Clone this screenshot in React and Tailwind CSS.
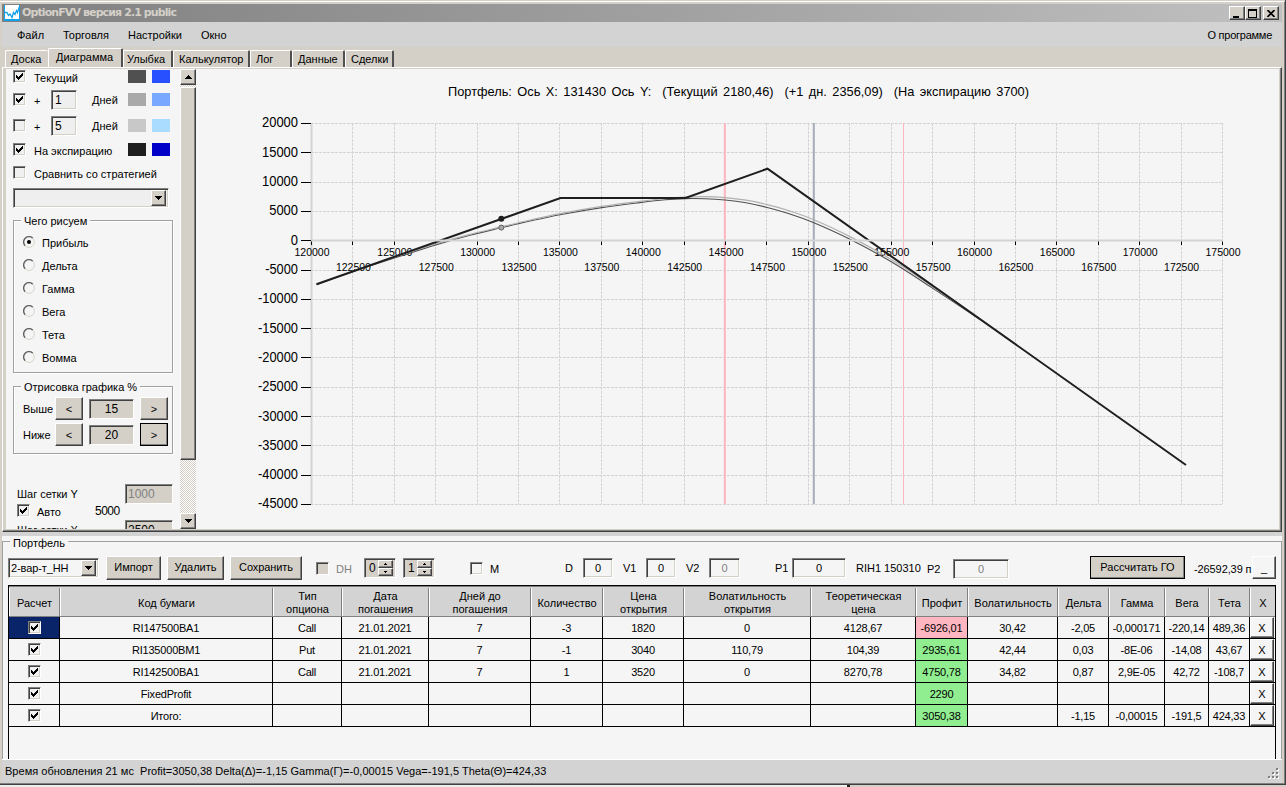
import React from "react";
import clsx from "clsx";

const RAISED =
  "border border-t-white border-l-white border-r-[#404040] border-b-[#404040] shadow-[inset_-1px_-1px_0_#808080]";
const SUNKEN =
  "border border-t-[#808080] border-l-[#808080] border-r-white border-b-white shadow-[inset_1px_1px_0_#404040,inset_-1px_-1px_0_#d4d0c8]";

function Check({ checked, className }) {
  return (
    <span className={clsx("block h-[13px] w-[13px] shrink-0", SUNKEN, className || "bg-[#f0f0f0]")}>
      {checked && (
        <svg viewBox="0 0 11 11" className="block h-[11px] w-[11px]" shapeRendering="crispEdges">
          <path d="M2 4h1v3h-1zM3 5h1v3h-1zM4 6h1v3h-1zM5 5h1v3h-1zM6 4h1v3h-1zM7 3h1v3h-1zM8 2h1v3h-1z" />
        </svg>
      )}
    </span>
  );
}

function Arrow({ up }) {
  return (
    <svg viewBox="0 0 7 4" className="h-[4px] w-[7px]" shapeRendering="crispEdges">
      <path d={up ? "M3 0h1v1h1v1h1v1h1v1h-7v-1h1v-1h1v-1h1z" : "M0 0h7v1h-1v1h-1v1h-1v1h-1v-1h-1v-1h-1v-1h-1z"} />
    </svg>
  );
}

function Button({ className, children }) {
  return (
    <button className={clsx("flex shrink-0 items-center justify-center whitespace-nowrap", RAISED, className)}>
      {children}
    </button>
  );
}

function Field({ className, children }) {
  return <div className={clsx("flex shrink-0 items-center", SUNKEN, className)}>{children}</div>;
}

function Combo({ className, children }) {
  return (
    <div className={clsx("flex h-5 items-center justify-between p-[2px]", SUNKEN, className)}>
      <span className="whitespace-nowrap tracking-[-0.1px]">{children}</span>
      <Button className="h-4 w-[15px] bg-[#d4d0c8]">
        <Arrow />
      </Button>
    </div>
  );
}

function Spin({ value, className }) {
  return (
    <div className={clsx("flex h-5 w-8 shrink-0 items-center justify-between bg-[#d4d0c8] p-[2px] pl-1", SUNKEN, className)}>
      <span className="text-[12px]">{value}</span>
      <div className="flex flex-col">
        {[true, false].map((up) => (
          <Button key={String(up)} className="h-2 w-[15px] bg-[#d4d0c8]">
            <svg viewBox="0 0 3 2" className="h-[2px] w-[3px]" shapeRendering="crispEdges">
              <path d={up ? "M1 0h1v1h1v1h-3v-1h1z" : "M0 0h3v1h-1v1h-1v-1h-1z"} />
            </svg>
          </Button>
        ))}
      </div>
    </div>
  );
}

function Group({ title, className, children }) {
  return (
    <div className={clsx("relative w-[160px] border border-[#a0a0a0] shadow-[inset_1px_1px_0_#fff,1px_1px_0_#fff]", className)}>
      <span className="absolute -top-[7px] left-[7px] whitespace-nowrap bg-[#f5f5f5] px-[3px] leading-[15px]">
        {title}
      </span>
      {children}
    </div>
  );
}

function TitleBar() {
  return (
    <div className="flex h-[18px] items-center bg-linear-to-r from-[#808080] to-[#c0c0c0] pl-[2px] pr-[3px]">
      <svg viewBox="0 0 16 16" className="h-4 w-4">
        <rect width="16" height="16" fill="#14a0e8" />
        <rect x="1" y="0" width="14" height="14" fill="#fff" />
        <path d="M1 7.5h2l1.5 3 1.5-1.5 2 3.5 1.5-5 1.5 2 1.5-4 1 2 2-6" fill="none" stroke="#14a0e8" strokeWidth="1.3" />
      </svg>
      <span className="ml-[2px] font-['DejaVu_Sans'] text-[11px] font-bold tracking-[-0.9px] text-[#d4d0c8]">
        OptionFVV версия 2.1 public
      </span>
      <div className="ml-auto flex">
        <Button className="h-[14px] w-4 bg-[#d4d0c8]">
          <svg viewBox="0 0 10 9" className="h-[9px] w-[10px]" shapeRendering="crispEdges">
            <path d="M1 7h6v2h-6z" />
          </svg>
        </Button>
        <Button className="h-[14px] w-4 bg-[#d4d0c8]">
          <svg viewBox="0 0 10 9" className="h-[9px] w-[10px]" shapeRendering="crispEdges">
            <path fillRule="evenodd" d="M0 0h9v9h-9zM1 2h7v6h-7z" />
          </svg>
        </Button>
        <Button className="ml-[2px] h-[14px] w-4 bg-[#d4d0c8]">
          <svg viewBox="0 0 8 7" className="h-[7px] w-2">
            <path d="M.5 0l7 7M7.5 0l-7 7" stroke="#000" strokeWidth="1.7" />
          </svg>
        </Button>
      </div>
    </div>
  );
}

function MenuBar() {
  return (
    <div className="flex h-[25px] items-center bg-[#d3d3d3] pl-[15px] pr-[10px]">
      <span className="w-[46px]">Файл</span>
      <span className="w-[65px]">Торговля</span>
      <span className="w-[73px]">Настройки</span>
      <span>Окно</span>
      <span className="ml-auto tracking-[-0.25px]">О программе</span>
    </div>
  );
}

const tabs = [
  ["Доска", "w-[43px]"],
  ["Диаграмма", "w-[75px]"],
  ["Улыбка", "w-[50px]"],
  ["Калькулятор", "w-[77px]"],
  ["Лог", "w-[42px]"],
  ["Данные", "w-[53px]"],
  ["Сделки", "w-[49px]"],
];

function Tabs() {
  return (
    <div className="flex h-5 items-end pl-[3px]">
      {tabs.map(([name, width], i) => (
        <div
          key={name}
          className={clsx(
            "flex whitespace-nowrap rounded-t-[2px] border-l border-t border-white bg-[#d4d0c8]",
            i === 0 ? "" : "border-r-2 border-r-[#505050]",
            i === 1 ? "h-[19px] pl-[7px]" : "h-[17px]",
            i === 2 ? "pl-[3px]" : i !== 1 && "pl-[5px]",
            width
          )}
        >
          {name}
        </div>
      ))}
    </div>
  );
}

const modes = ["Прибыль", "Дельта", "Гамма", "Вега", "Тета", "Вомма"];

function Radio({ checked }) {
  return (
    <svg viewBox="0 0 12 12" className="h-3 w-3">
      <circle cx="6" cy="6" r="5.2" fill="#f5f5f5" stroke="#fff" />
      <path d="M2.2 9.8A5.2 5.2 0 0 1 9.8 2.2" fill="none" stroke="#606060" strokeWidth="1.4" />
      <path d="M9.8 2.2A5.2 5.2 0 0 1 2.2 9.8" fill="none" stroke="#d4d0c8" />
      {checked && <circle cx="6" cy="6" r="2" />}
    </svg>
  );
}

function Swatches({ gray, blue }) {
  return (
    <div className="ml-auto mr-[10px] flex gap-[6px]">
      <div className={clsx("h-[13px] w-[18px]", gray)} />
      <div className={clsx("h-[13px] w-[18px]", blue)} />
    </div>
  );
}

function DaysRow({ checked, days, className, gray, blue }) {
  return (
    <div className={clsx("flex items-center", className)}>
      <Check checked={checked} />
      <span className="ml-2 w-[17px] pt-[2px]">+</span>
      <Field className="h-5 w-[26px] bg-[#efefef] pl-[3px] text-[12px]">{days}</Field>
      <span className="ml-[15px]">Дней</span>
      <Swatches gray={gray} blue={blue} />
    </div>
  );
}

function RangeRow({ label, value, focused }) {
  return (
    <div className="mb-[3px] flex h-[23px] items-center pl-[9px]">
      <span className="w-8">{label}</span>
      <Button className="h-[23px] w-7 bg-[#d4d0c8]">&lt;</Button>
      <Field className="ml-[6px] h-5 w-[45px] justify-center bg-[#d4d0c8] text-[12px]">{value}</Field>
      <Button className={clsx("ml-[6px] h-[23px] w-7 bg-[#d4d0c8]", focused && "outline-1 -outline-offset-1 outline-black")}>
        &gt;
      </Button>
    </div>
  );
}

function Sidebar() {
  return (
    <div className="flex w-[190px] shrink-0">
      <div className="flex w-[174px] flex-col overflow-hidden pl-[7px]">
        <div className="flex h-[15px] shrink-0 items-center">
          <Check checked />
          <span className="ml-2 pt-[2px]">Текущий</span>
          <Swatches gray="bg-[#505050]" blue="bg-[#2850ff]" />
        </div>
        <DaysRow checked days="1" className="h-[31px] shrink-0" gray="bg-[#a9a9a9]" blue="bg-[#78a8ff]" />
        <DaysRow days="5" className="h-[21px] shrink-0" gray="bg-[#c8c8c8]" blue="bg-[#aadcff]" />
        <div className="flex h-[27px] shrink-0 items-center">
          <Check checked />
          <span className="ml-2 pt-[3px]">На экспирацию</span>
          <Swatches gray="bg-[#1e1e1e]" blue="bg-[#0000c8]" />
        </div>
        <div className="flex h-[19px] shrink-0 items-center">
          <Check />
          <span className="ml-2 whitespace-nowrap pt-[3px]">Сравнить со стратегией</span>
        </div>
        <Combo className="mt-[6px] w-[156px] shrink-0 bg-[#efefef]" />

        <Group title="Чего рисуем" className="mt-3 h-[153px] shrink-0 pt-[9px]">
          {modes.map((mode, i) => (
            <div key={mode} className="flex h-[23px] items-center pl-[9px]">
              <Radio checked={i === 0} />
              <span className="ml-[7px] pt-[2px]">{mode}</span>
            </div>
          ))}
        </Group>

        <Group title="Отрисовка графика %" className="mt-[13px] h-[68px] shrink-0 pt-[10px]">
          <RangeRow label="Выше" value="15" />
          <RangeRow label="Ниже" value="20" focused />
        </Group>

        <div className="mt-[30px] flex h-5 shrink-0 items-center pl-1">
          <span className="w-[108px]">Шаг сетки Y</span>
          <Field className="h-5 w-12 bg-[#d4d0c8] pl-[2px] text-[12px] text-[#808080]">1000</Field>
        </div>
        <div className="flex h-[13px] shrink-0 items-center pl-1">
          <Check checked />
          <span className="ml-[7px] w-[58px] pt-[2px]">Авто</span>
          <span className="text-[12px] tracking-[-0.5px]">5000</span>
        </div>
        <div className="mt-[3px] flex h-5 shrink-0 items-center pl-1">
          <span className="w-[108px]">Шаг сетки X</span>
          <Field className="h-5 w-12 bg-[#d4d0c8] pl-[2px] text-[12px]">2500</Field>
        </div>
      </div>

      {/* Scrollbar */}
      <div className="flex w-4 flex-col bg-[conic-gradient(#d4d0c8_25%,#fff_0_50%,#d4d0c8_0_75%,#fff_0)] bg-size-[2px_2px]">
        <Button className="h-4 bg-[#d4d0c8]">
          <Arrow up />
        </Button>
        <div className={clsx("mt-[2px] h-[373px] bg-[#d4d0c8]", RAISED)} />
        <Button className="mt-auto h-4 bg-[#d4d0c8]">
          <Arrow />
        </Button>
      </div>
    </div>
  );
}

// Chart scales
const px = (v) => 311.5 + ((v - 120000) / 2500) * 41.409;
const py = (v) => 240.7 - (v / 5000) * 29.31;
const snap = (n) => Math.floor(n) + 0.5;
const xTicks = Array.from({ length: 23 }, (_, i) => 120000 + i * 2500);
const yTicks = Array.from({ length: 14 }, (_, i) => 20000 - i * 5000);

const current = [
  [316.5, 284.5], [355, 271], [396.7, 257.3], [436.7, 244.6], [470, 235.3], [501, 227.8], [530, 221], [560, 214.7],
  [601.7, 207.6], [640, 202.6], [665, 199.8], [685, 198.6], [705, 198.7], [725, 200], [746, 202.8], [767.3, 207.5], [790, 214],
  [813.3, 222.4], [850, 239.2], [891.7, 262], [931.7, 287.6], [980, 319.6],
];
const nextDay = [
  [316.5, 284.3], [355, 270.6], [396.7, 256.3], [436.7, 243.6], [470, 234.4], [501, 226.9], [530, 220], [560, 213.6],
  [601.7, 206.4], [640, 201.3], [665, 198.5], [685, 197.1], [705, 196.7], [725, 197.7], [746, 200.2], [767.3, 204.6], [790, 211],
  [813.3, 219.5], [850, 236.6], [891.7, 259.8], [931.7, 286], [980, 319],
];

function smooth(pts) {
  let d = `M${pts[0].join(" ")}`;
  for (let i = 0; i < pts.length - 1; i++) {
    const [a, b, c, e] = [pts[Math.max(i - 1, 0)], pts[i], pts[i + 1], pts[Math.min(i + 2, pts.length - 1)]];
    d += `C${b[0] + (c[0] - a[0]) / 6} ${b[1] + (c[1] - a[1]) / 6} ${c[0] - (e[0] - b[0]) / 6} ${c[1] - (e[1] - b[1]) / 6} ${c[0]} ${c[1]}`;
  }
  return d;
}

function Chart() {
  return (
    <svg viewBox="196 69 1082 459" className="block h-[459px] w-[1082px] font-['Liberation_Sans',Arial,sans-serif]">
      <text
        x="448"
        y="96"
        fontSize="13.33"
        textLength="581"
        lengthAdjust="spacingAndGlyphs"
        xmlSpace="preserve"
        className="whitespace-pre [word-spacing:2px]"
      >
        {"Портфель: Ось X: 131430 Ось Y:  (Текущий 2180,46)  (+1 дн. 2356,09)  (На экспирацию 3700)"}
      </text>

      <g stroke="#d3d3d3" strokeDasharray="3 1" shapeRendering="crispEdges">
        {xTicks.map((v) => (
          <line key={v} x1={snap(px(v))} x2={snap(px(v))} y1="123" y2="504" />
        ))}
        {yTicks.map((v) => (
          <line key={v} x1="311" x2="1223" y1={snap(py(v))} y2={snap(py(v))} />
        ))}
      </g>
      <line x1="311.5" x2="311.5" y1="123" y2="504" stroke="#d3d3d3" strokeWidth="2" />

      <path d="M724.8 123V504" stroke="#ffb6c1" strokeWidth="2" />
      <path d="M813.8 123V504" stroke="#a6abb8" strokeWidth="2" />
      <path d="M903.5 123V504" stroke="#ffb6c1" />

      {yTicks.map((v) => (
        <g key={v}>
          <line x1="301" x2="311" y1={snap(py(v))} y2={snap(py(v))} stroke="#000" />
          <text
            x="298"
            y={py(v) + 4}
            fontSize="14"
            textAnchor="end"
            textLength={String(Math.abs(v)).length * 7.2 + (v < 0 ? 4 : 0)}
            lengthAdjust="spacingAndGlyphs"
          >
            {v}
          </text>
        </g>
      ))}
      {xTicks.map((v, i) => (
        <g key={v}>
          <line x1={snap(px(v))} x2={snap(px(v))} y1="241" y2="245" stroke="#000" />
          <text x={px(v) + 0.5} y={i % 2 ? 271 : 256} fontSize="11" textAnchor="middle" textLength="35" lengthAdjust="spacingAndGlyphs">
            {v}
          </text>
        </g>
      ))}

      <path d={smooth(current)} fill="none" stroke="#505050" strokeWidth="1.1" />
      <path d={smooth(nextDay)} fill="none" stroke="#b0b0b0" strokeWidth="1.2" />
      <path d="M316.5 284.3L560.5 198H685.5L767.5 168.7L1186 465" fill="none" stroke="#1e1e1e" strokeWidth="2" />
      <path d="M311 240.5H1223" stroke="#d3d3d3" strokeWidth="2" />
      <circle cx="501.3" cy="218.8" r="3" fill="#1e1e1e" />
      <circle cx="501.3" cy="227.6" r="2.5" fill="#a9a9a9" stroke="#606060" />
    </svg>
  );
}

function Toolbar() {
  return (
    <div className="flex h-6 items-center pl-[6px]">
      <Combo className="w-[91px] bg-[#f5f5f5]">2-вар-т_НН</Combo>
      <Button className="ml-[7px] h-6 w-[55px] bg-[#d4d0c8] pb-[2px]">Импорт</Button>
      <Button className="ml-[6px] h-6 w-[57px] bg-[#d4d0c8] pb-[2px]">Удалить</Button>
      <Button className="ml-[6px] h-6 w-[72px] bg-[#d4d0c8] pb-[2px] tracking-[-0.1px]">Сохранить</Button>
      <Check className="ml-[14px] bg-[#d4d0c8]" />
      <span className="ml-[7px] w-7 pt-[2px] text-[#808080]">DH</span>
      <Spin value="0" />
      <Spin value="1" className="ml-[7px]" />
      <Check className="ml-[35px] bg-[#f5f5f5]" />
      <span className="ml-[7px] w-[75px] pt-[2px]">M</span>
      <span className="w-[18px]">D</span>
      <Field className="h-5 w-[30px] justify-center">0</Field>
      <span className="ml-[10px] w-[23px]">V1</span>
      <Field className="h-5 w-[30px] justify-center">0</Field>
      <span className="ml-[10px] w-[23px]">V2</span>
      <Field className="h-5 w-[31px] justify-center text-[#808080]">0</Field>
      <span className="ml-[35px] w-[17px]">P1</span>
      <Field className="h-5 w-[54px] justify-center">0</Field>
      <span className="ml-[10px] w-[71px] whitespace-nowrap">RIH1 150310</span>
      <span className="w-[26px] pt-[2px]">P2</span>
      <Field className="mt-px h-5 w-[56px] justify-center text-[#808080]">0</Field>
      <Button className="-mt-px ml-[81px] h-[23px] w-[95px] bg-[#d4d0c8] pb-px outline-1 -outline-offset-1 outline-black">
        Рассчитать ГО
      </Button>
      <span className="ml-[9px] w-[58px] whitespace-nowrap pt-[2px] tracking-[-0.1px]">-26592,39 п</span>
      <Button className="-mt-px h-[23px] w-6 bg-[#f5f5f5]">_</Button>
    </div>
  );
}

const columns =
  "grid grid-cols-[51px_213px_69px_87px_102px_72px_81px_127px_105px_52px_90px_51px_56px_44px_41px_25px]";

const headers = [
  "Расчет", "Код бумаги", "Тип\nопциона", "Дата\nпогашения", "Дней до\nпогашения", "Количество", "Цена\nоткрытия",
  "Волатильность\nоткрытия", "Теоретическая\nцена", "Профит", "Волатильность", "Дельта", "Гамма", "Вега", "Тета", "X",
];

const rows = [
  ["RI147500BA1", "Call", "21.01.2021", "7", "-3", "1820", "0", "4128,67", "-6926,01", "30,42", "-2,05", "-0,000171", "-220,14", "489,36"],
  ["RI135000BM1", "Put", "21.01.2021", "7", "-1", "3040", "110,79", "104,39", "2935,61", "42,44", "0,03", "-8E-06", "-14,08", "43,67"],
  ["RI142500BA1", "Call", "21.01.2021", "7", "1", "3520", "0", "8270,78", "4750,78", "34,82", "0,87", "2,9E-05", "42,72", "-108,7"],
  ["FixedProfit", "", "", "", "", "", "", "", "2290", "", "", "", "", ""],
  ["Итого:", "", "", "", "", "", "", "", "3050,38", "", "-1,15", "-0,00015", "-191,5", "424,33"],
];

function PositionsTable() {
  return (
    <div className="ml-[6px] h-[174px] w-[1268px] border border-b-0 border-black">
      <div className={clsx("h-[31px] border-y border-[#808080] bg-[#d3d3d3]", columns)}>
        {headers.map((h, i) => (
          <div
            key={i}
            className={clsx(
              "my-px flex items-center justify-center whitespace-pre border-l border-l-white pt-[2px] text-center leading-[13px]",
              i < 15 && "border-r border-r-[#808080]"
            )}
          >
            {h}
          </div>
        ))}
      </div>
      {rows.map((row, r) => (
        <div key={r} className={clsx("h-[22px]", columns)}>
          <div className={clsx("flex items-center justify-center border-b border-r border-black", r === 0 && "bg-[#0a246a]")}>
            <Check checked />
          </div>
          {row.map((cell, i) => (
            <div
              key={i}
              className={clsx(
                "flex items-center justify-center whitespace-nowrap border-b border-r border-black tracking-[-0.2px]",
                i === 8 && (r === 0 ? "bg-[#ffb6c1]" : "bg-[#90ee90]")
              )}
            >
              {cell}
            </div>
          ))}
          <div className="border-b border-black">
            <Button className="h-[21px] w-6 bg-[#f5f5f5]">X</Button>
          </div>
        </div>
      ))}
    </div>
  );
}

function StatusBar() {
  return (
    <div className="flex h-6 justify-between border-t border-white bg-[#d3d3d3] pl-[3px] pr-[2px]">
      <span className="whitespace-pre pt-[3px] tracking-[0.02px]">
        {"Время обновления 21 мс  Profit=3050,38 Delta(Δ)=-1,15 Gamma(Г)=-0,00015 Vega=-191,5 Theta(Θ)=424,33"}
      </span>
      <svg viewBox="0 0 12 12" className="mt-2 h-3 w-3" shapeRendering="crispEdges">
        {[[8, 0], [4, 4], [8, 4], [0, 8], [4, 8], [8, 8]].map(([x, y]) => (
          <g key={`${x}-${y}`}>
            <rect x={x + 1} y={y + 1} width="2" height="2" fill="#fff" />
            <rect x={x} y={y} width="2" height="2" fill="#808080" />
          </g>
        ))}
      </svg>
    </div>
  );
}

export default function App() {
  return (
    <div className="h-[787px] w-[1286px] overflow-hidden bg-[#d4d0c8] font-['Liberation_Sans',Arial,sans-serif] text-[11px] leading-4 text-black">
      <div className="h-[785px] border-b border-r border-[#404040] pt-px">
        <div className="h-[783px] border-b border-r border-t border-b-[#808080] border-r-[#808080] border-t-white pl-[2px] pr-[2px] pt-[2px]">
          <TitleBar />
          <MenuBar />
          <Tabs />

          {/* Tab page */}
          <div className="h-[465px] border border-b-[#404040] border-l-white border-r-[#404040] border-t-white pl-[3px] pr-[2px] pt-px shadow-[inset_-1px_-1px_0_#808080]">
            <div className="flex h-[460px] bg-[#f5f5f5]">
              <Sidebar />
              <Chart />
            </div>
          </div>
          <div className="h-1 bg-[#d3d3d3]" />

          {/* Portfolio */}
          <div className="h-[223px] overflow-hidden bg-[#f5f5f5] pt-[5px]">
            <div className="relative h-[218px] border border-b-0 border-[#a0a0a0] pt-[14px]">
              <span className="absolute -top-[7px] left-[7px] bg-[#f5f5f5] px-[3px] leading-4">Портфель</span>
              <div className="-ml-px">
                <Toolbar />
              </div>
              <div className="-ml-px mt-[5px]">
                <PositionsTable />
              </div>
            </div>
          </div>
          <StatusBar />
        </div>
      </div>
      <div className="flex h-[2px]">
        <div className="w-[847px] bg-[#eeeeea]" />
        <div className="w-[3px] bg-[#202020]" />
      </div>
    </div>
  );
}
